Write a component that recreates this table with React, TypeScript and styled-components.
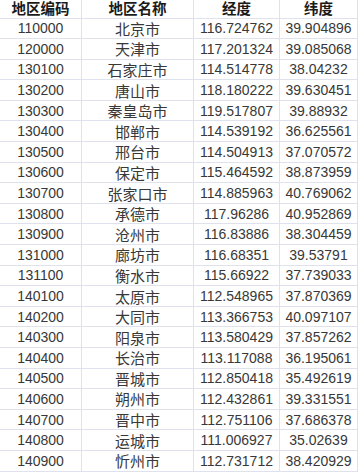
import React from "react";
import styled, { createGlobalStyle } from "styled-components";

const Global = createGlobalStyle`
  html, body { margin: 0; padding: 0; background: #ffffff; }
  body { font-family: "Liberation Sans", "Noto Sans CJK SC", sans-serif; }
`;

const rows: [string, string, string, string][] = [
  ["110000", "北京市", "116.724762", "39.904896"],
  ["120000", "天津市", "117.201324", "39.085068"],
  ["130100", "石家庄市", "114.514778", "38.04232"],
  ["130200", "唐山市", "118.180222", "39.630451"],
  ["130300", "秦皇岛市", "119.517807", "39.88932"],
  ["130400", "邯郸市", "114.539192", "36.625561"],
  ["130500", "邢台市", "114.504913", "37.070572"],
  ["130600", "保定市", "115.464592", "38.873959"],
  ["130700", "张家口市", "114.885963", "40.769062"],
  ["130800", "承德市", "117.96286", "40.952869"],
  ["130900", "沧州市", "116.83886", "38.304459"],
  ["131000", "廊坊市", "116.68351", "39.53791"],
  ["131100", "衡水市", "115.66922", "37.739033"],
  ["140100", "太原市", "112.548965", "37.870369"],
  ["140200", "大同市", "113.366753", "40.097107"],
  ["140300", "阳泉市", "113.580429", "37.857262"],
  ["140400", "长治市", "113.117088", "36.195061"],
  ["140500", "晋城市", "112.850418", "35.492619"],
  ["140600", "朔州市", "112.432861", "39.331551"],
  ["140700", "晋中市", "112.751106", "37.686378"],
  ["140800", "运城市", "111.006927", "35.02639"],
  ["140900", "忻州市", "112.731712", "38.420929"],
];

const Sheet = styled.div`
  width: 358px;
  height: 472px;
  overflow: hidden;
  display: grid;
  grid-template-columns: 82px 112px 86px 78px;
  grid-template-rows: 18.5px;
  grid-auto-rows: 20.6px;
  background: #ffffff;
`;

const Cell = styled.div<{ $head?: boolean }>`
  display: flex;
  align-items: center;
  justify-content: center;
  border-bottom: 1px solid #dfe2ec;
  border-right: 1px solid #dfe2ec;
  font-size: ${(p) => (p.$head ? "14.5px" : "14px")};
  font-weight: ${(p) => (p.$head ? 700 : 400)};
  color: ${(p) => (p.$head ? "#1a1a1a" : "#383838")};
  white-space: nowrap;
  box-sizing: border-box;
  line-height: 1;
`;

const CjkText = styled.span`
  font-family: "Noto Sans CJK SC", sans-serif;
  font-size: 15px;
`;

export default function App() {
  return (
    <>
      <Global />
      <Sheet>
        <Cell $head>地区编码</Cell>
        <Cell $head>地区名称</Cell>
        <Cell $head>经度</Cell>
        <Cell $head>纬度</Cell>
        {rows.map((r) => (
          <React.Fragment key={r[0]}>
            <Cell>{r[0]}</Cell>
            <Cell>
              <CjkText>{r[1]}</CjkText>
            </Cell>
            <Cell>{r[2]}</Cell>
            <Cell>{r[3]}</Cell>
          </React.Fragment>
        ))}
      </Sheet>
    </>
  );
}
